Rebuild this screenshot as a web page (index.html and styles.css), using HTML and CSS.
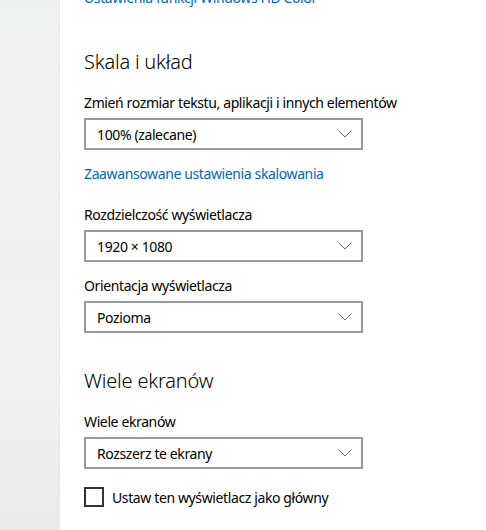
FILE: index.html
```html
<!DOCTYPE html>
<html lang="pl">
<head>
<meta charset="utf-8">
<link rel="stylesheet" href="styles.css">
</head>
<body>
<div class="window">
  <aside class="sidebar"></aside>
  <main class="content">
    <a class="link top-link">Ustawienia funkcji Windows HD Color</a>
    <h2 class="heading first">Skala i układ</h2>
    <div class="label">Zmień rozmiar tekstu, aplikacji i innych elementów</div>
    <div class="select"><span>100% (zalecane)</span><svg class="chev" viewBox="0 0 14 8" width="14" height="8"><path d="M0.5 0.5 L7 7 L13.5 0.5" fill="none" stroke="#666" stroke-width="1"/></svg></div>
    <a class="link adv">Zaawansowane ustawienia skalowania</a>
    <div class="label gap-lg">Rozdzielczość wyświetlacza</div>
    <div class="select"><span>1920 × 1080</span><svg class="chev" viewBox="0 0 14 8" width="14" height="8"><path d="M0.5 0.5 L7 7 L13.5 0.5" fill="none" stroke="#666" stroke-width="1"/></svg></div>
    <div class="label gap-sm">Orientacja wyświetlacza</div>
    <div class="select"><span>Pozioma</span><svg class="chev" viewBox="0 0 14 8" width="14" height="8"><path d="M0.5 0.5 L7 7 L13.5 0.5" fill="none" stroke="#666" stroke-width="1"/></svg></div>
    <h2 class="heading second">Wiele ekranów</h2>
    <div class="label">Wiele ekranów</div>
    <div class="select"><span>Rozszerz te ekrany</span><svg class="chev" viewBox="0 0 14 8" width="14" height="8"><path d="M0.5 0.5 L7 7 L13.5 0.5" fill="none" stroke="#666" stroke-width="1"/></svg></div>
    <label class="check"><span class="box"></span><span>Ustaw ten wyświetlacz jako główny</span></label>
  </main>
</div>
</body>
</html>
```
FILE: styles.css
```css
* { box-sizing: border-box; }
html, body { margin: 0; padding: 0; height: 100%; overflow: hidden; }
body {
  font-family: "Noto Sans", "Open Sans", sans-serif;
  color: #000;
  background: #fff;
  letter-spacing: -0.38px;
}
.window { display: flex; height: 530px; }
.sidebar {
  width: 60px;
  flex: none;
  background: linear-gradient(180deg, #eef1f2 0%, #f2f1f0 30%, #eef0f2 50%, #f2f2f2 70%, #e9e9ea 100%);
  border-right: 1px solid #e8e8e8;
}
.content {
  flex: 1;
  padding-left: 24px;
  display: flex;
  flex-direction: column;
  align-items: flex-start;
}
.link {
  color: #0067b8;
  font-size: 14px;
  line-height: 20px;
}
.top-link { margin-top: -12px; }
.heading {
  font-weight: 300;
  font-size: 20px;
  line-height: 28px;
  margin: 0;
  letter-spacing: -0.2px;
}
.heading.first { margin-top: 40px; }
.heading.second { margin-top: 34px; }
.label {
  font-size: 14px;
  line-height: 20px;
  margin-top: 17px;
}
.label.gap-lg { margin-top: 21px; }
.label.gap-sm { margin-top: 14px; }
.select {
  width: 279px;
  height: 32px;
  border: 2px solid #999;
  display: flex;
  align-items: center;
  justify-content: space-between;
  padding: 0 9px 0 11px;
  font-size: 14px;
}
.label + .select { margin-top: 5px; }
.chev { display: block; }
.adv { margin-top: 14px; }
.check {
  display: flex;
  align-items: center;
  gap: 8px;
  font-size: 14px;
  margin-top: 18px;
}
.box {
  width: 20px;
  height: 20px;
  border: 2px solid #333;
  display: block;
}
```
